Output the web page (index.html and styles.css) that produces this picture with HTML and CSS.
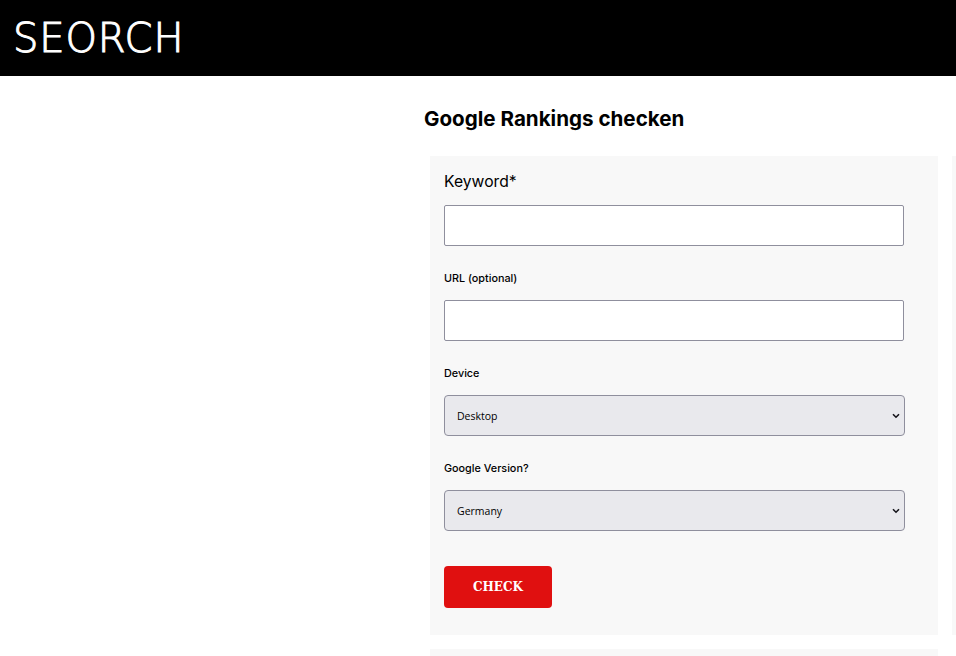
FILE: index.html
```html
<!DOCTYPE html>
<html lang="de">
<head>
  <meta charset="UTF-8" />
  <meta name="viewport" content="width=device-width, initial-scale=1.0"/>
  <title>SEORCH</title>
  <link rel="stylesheet" href="styles.css">
</head>
<body>

  <header class="topbar">
    <a class="logo" href="#">SEORCH</a>
  </header>

  <main class="content">
    <h1>Google Rankings checken</h1>

    <div class="panels">
      <form class="panel">
        <label class="label-big" for="keyword">Keyword*</label>
        <input class="field" id="keyword" type="text">

        <label class="label" for="url">URL (optional)</label>
        <input class="field" id="url" type="text">

        <label class="label" for="device">Device</label>
        <select class="field select" id="device">
          <option>Desktop</option>
          <option>Mobile</option>
        </select>

        <label class="label" for="version">Google Version?</label>
        <select class="field select" id="version">
          <option>Germany</option>
          <option>Austria</option>
          <option>Switzerland</option>
        </select>

        <button class="btn" type="button">CHECK</button>
      </form>

      <div class="panel side"></div>
      <div class="panel bottom"></div>
    </div>
  </main>

</body>
</html>
```

FILE: styles.css
```css
html, body {
  height: 100%;
  overflow: hidden;
}

body {
  margin: 0;
  font-family: Inter, Lato, sans-serif;
  background-color: #fff;
  color: #000;
}

.topbar {
  height: 76px;
  background-color: #000;
  padding-left: 13px;
}

.logo {
  display: block;
  font-family: "DejaVu Sans", sans-serif;
  font-weight: 200;
  font-size: 40px;
  line-height: 76px;
  letter-spacing: 0.9px;
  -webkit-text-stroke: 1px #fff;
  color: #fff;
  text-decoration: none;
}

.content {
  padding-left: 424px;
}

h1 {
  margin: 0;
  padding-top: 30px;
  font-size: 20.6px;
  line-height: 26px;
  font-weight: 700;
}

.panels {
  display: grid;
  grid-template-columns: 508px 200px;
  gap: 14px;
  margin-top: 24px;
  margin-left: 6px;
}

.panel {
  background-color: #f8f8f8;
}

form.panel {
  display: flex;
  flex-direction: column;
  align-items: flex-start;
  height: 479px;
  box-sizing: border-box;
  padding: 14px;
}

.bottom {
  height: 40px;
}

.label-big {
  font-size: 15.7px;
  font-weight: 400;
  line-height: 22px;
  padding-top: 1px;
  margin-bottom: 12px;
}

.label {
  font-size: 10.8px;
  font-weight: 500;
  line-height: 16px;
  margin-top: 25px;
  margin-bottom: 13px;
}

.field {
  box-sizing: border-box;
  width: 460px;
  height: 41px;
  border: 1px solid #8f8f9d;
  border-radius: 2px;
  background-color: #fff;
}

.select {
  appearance: none;
  width: 461px;
  padding-left: 12px;
  border-radius: 4px;
  background-color: #e9e9ed;
  background-image: url("data:image/svg+xml,%3Csvg xmlns='http://www.w3.org/2000/svg' width='8' height='6' viewBox='0 0 8 6'%3E%3Cpath d='M1 1.2 4 4.2 7 1.2' fill='none' stroke='%2315141a' stroke-width='1.6'/%3E%3C/svg%3E");
  background-repeat: no-repeat;
  background-position: right 4px center;
  font-family: "Open Sans", sans-serif;
  font-size: 10.5px;
  color: #000;
}

.btn {
  margin-top: 35px;
  width: 108px;
  height: 42px;
  padding: 0;
  background-color: #e01010;
  color: #fff;
  border: none;
  border-radius: 4px;
  font-family: "DejaVu Serif", serif;
  font-weight: 700;
  font-size: 12px;
  cursor: pointer;
}
```
